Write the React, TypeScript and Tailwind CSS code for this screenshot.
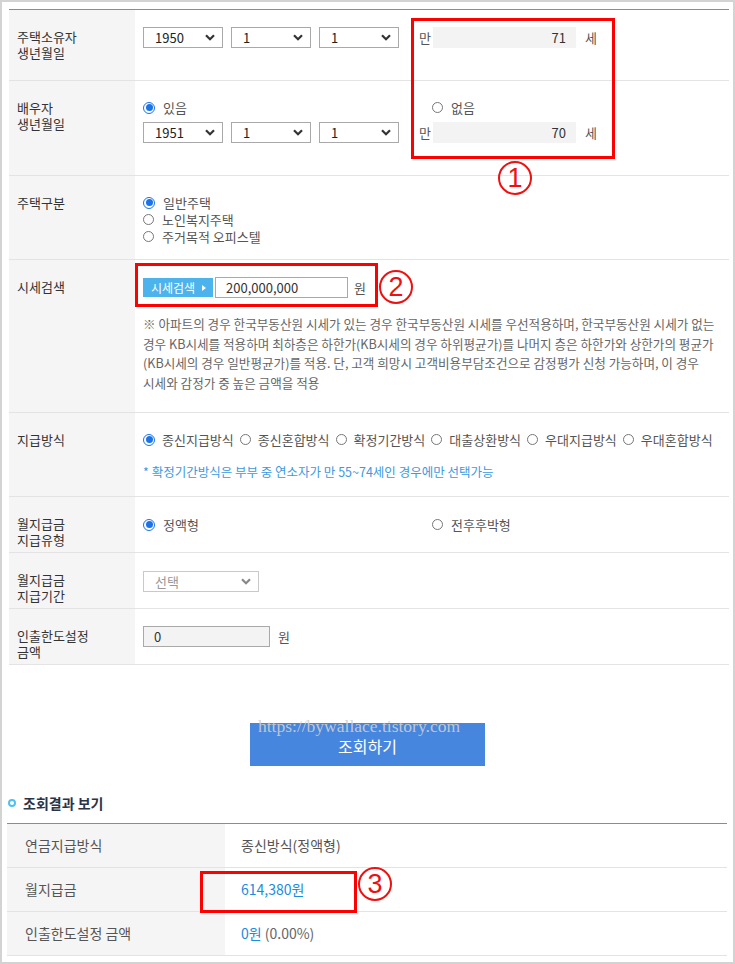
import React from "react";

const font = { fontFamily: "'Noto Sans CJK KR', 'Noto Sans', sans-serif" };

const Radio: React.FC<{ checked?: boolean }> = ({ checked }) =>
  checked ? (
    <span className="inline-flex w-[12px] h-[12px] shrink-0 items-center justify-center rounded-full border border-[#1a73e8] bg-white">
      <span className="w-[7px] h-[7px] rounded-full bg-[#1a73e8]" />
    </span>
  ) : (
    <span className="inline-block w-[11px] h-[11px] shrink-0 rounded-full border border-[#767676] bg-white" />
  );

const Chevron: React.FC<{ color?: string }> = ({ color = "#333" }) => (
  <svg width="10" height="7" viewBox="0 0 10 7">
    <path d="M1 1.2 L5 5.2 L9 1.2" fill="none" stroke={color} strokeWidth="2.2" />
  </svg>
);

const Select: React.FC<{ value: string; width: string; muted?: boolean }> = ({ value, width, muted }) => (
  <div
    className={`${width} h-[21px] flex items-center justify-between pl-[11px] pr-[7px] border bg-white text-[13px] ${
      muted ? "border-[#c9c9c9] text-[#999]" : "border-[#a9a9a9] text-[#222]"
    }`}
  >
    <span>{value}</span>
    <Chevron color={muted ? "#888" : "#333"} />
  </div>
);

const AgeBox: React.FC<{ age: string }> = ({ age }) => (
  <div className="flex items-center text-[13px] text-[#555]">
    <span>만</span>
    <div className="ml-[2px] w-[143px] h-[21px] bg-[#f3f3f3] flex items-center justify-end pr-[10px] text-[#333]">
      {age}
    </div>
    <span className="ml-[9px]">세</span>
  </div>
);

const Row: React.FC<{ h: string; label: React.ReactNode; pt: string; children: React.ReactNode }> = ({
  h,
  label,
  pt,
  children,
}) => (
  <div className={`flex ${h} border-b border-[#e3e3e3]`}>
    <div className="w-[126px] shrink-0 bg-[#f5f5f5] pl-[8px] pt-[19px] text-[13px] leading-[16px] text-[#333]">
      {label}
    </div>
    <div className={`flex-1 pl-[8px] ${pt} text-[13px] text-[#555]`}>{children}</div>
  </div>
);

const Circled: React.FC<{ n: string; className: string }> = ({ n, className }) => (
  <div
    className={`absolute w-[34px] h-[34px] rounded-full border-2 border-[#ee1111] flex items-center justify-center text-[27px] leading-none text-[#ee1111] ${className}`}
    style={{ fontFamily: "'Liberation Sans', sans-serif" }}
  >
    {n}
  </div>
);

const methods = ["종신지급방식", "종신혼합방식", "확정기간방식", "대출상환방식", "우대지급방식", "우대혼합방식"];

const App: React.FC = () => {
  return (
    <div className="relative w-[735px] h-[964px] border-2 border-[#d3d3d3] bg-white overflow-hidden" style={font}>
      {/* 입력 테이블 */}
      <div className="ml-[7px] mr-[4px] mt-[7px] border-t border-[#8c8c8c]">
        <Row h="h-[71px]" pt="pt-[17px]" label={<>주택소유자<br />생년월일</>}>
          <div className="flex items-center">
            <div className="flex gap-[8px]">
              <Select value="1950" width="w-[80px]" />
              <Select value="1" width="w-[80px]" />
              <Select value="1" width="w-[80px]" />
            </div>
            <div className="ml-[20px]">
              <AgeBox age="71" />
            </div>
          </div>
        </Row>

        <Row h="h-[95px]" pt="pt-[18px]" label={<>배우자<br />생년월일</>}>
          <div className="flex items-center leading-[17px] text-[13px]">
            <div className="w-[289px] flex items-center gap-[8px]">
              <Radio checked />
              <span>있음</span>
            </div>
            <div className="flex items-center gap-[8px]">
              <Radio />
              <span>없음</span>
            </div>
          </div>
          <div className="mt-[6px] flex items-center">
            <div className="flex gap-[8px]">
              <Select value="1951" width="w-[80px]" />
              <Select value="1" width="w-[80px]" />
              <Select value="1" width="w-[80px]" />
            </div>
            <div className="ml-[20px]">
              <AgeBox age="70" />
            </div>
          </div>
        </Row>

        <Row h="h-[84px]" pt="pt-[18px]" label="주택구분">
          <div className="flex flex-col leading-[17px]">
            {[
              ["일반주택", true],
              ["노인복지주택", false],
              ["주거목적 오피스텔", false],
            ].map(([t, c]) => (
              <div key={t as string} className="flex items-center gap-[8px]">
                <Radio checked={c as boolean} />
                <span>{t as string}</span>
              </div>
            ))}
          </div>
        </Row>

        <Row h="h-[153px]" pt="pt-[17px]" label="시세검색">
          <div className="flex items-center">
            <div className="w-[70px] h-[19px] bg-[#4db3ec] text-white text-[12px] flex items-center pl-[8px] gap-[7px]">
              <span>시세검색</span>
              <svg width="4" height="6" viewBox="0 0 4 6">
                <path d="M0 0 L4 3 L0 6 Z" fill="#fff" />
              </svg>
            </div>
            <div className="ml-[2px] w-[133px] h-[21px] border border-[#a9a9a9] flex items-center pl-[10px] text-[13px] text-[#333]">
              200,000,000
            </div>
            <span className="ml-[6px]">원</span>
          </div>
          <div className="mt-[16px] text-[12.6px] leading-[19.5px] text-[#666] whitespace-nowrap">
            <div>※ 아파트의 경우 한국부동산원 시세가 있는 경우 한국부동산원 시세를 우선적용하며, 한국부동산원 시세가 없는</div>
            <div>경우 KB시세를 적용하며 최하층은 하한가(KB시세의 경우 하위평균가)를 나머지 층은 하한가와 상한가의 평균가</div>
            <div>(KB시세의 경우 일반평균가)를 적용. 단, 고객 희망시 고객비용부담조건으로 감정평가 신청 가능하며, 이 경우</div>
            <div>시세와 감정가 중 높은 금액을 적용</div>
          </div>
        </Row>

        <Row h="h-[84px]" pt="pt-[18px]" label="지급방식">
          <div className="flex items-center leading-[17px] whitespace-nowrap">
            {methods.map((m, i) => (
              <div key={m} className="flex items-center gap-[7px] mr-[6px]">
                <Radio checked={i === 0} />
                <span>{m}</span>
              </div>
            ))}
          </div>
          <div className="mt-[15px] leading-[17px] text-[12.5px] text-[#3b9ae1]">
            * 확정기간방식은 부부 중 연소자가 만 55~74세인 경우에만 선택가능
          </div>
        </Row>

        <Row h="h-[56px]" pt="pt-[19px]" label={<>월지급금<br />지급유형</>}>
          <div className="flex items-center leading-[17px]">
            <div className="w-[289px] flex items-center gap-[8px]">
              <Radio checked />
              <span>정액형</span>
            </div>
            <div className="flex items-center gap-[8px]">
              <Radio />
              <span>전후후박형</span>
            </div>
          </div>
        </Row>

        <Row h="h-[56px]" pt="pt-[18px]" label={<>월지급금<br />지급기간</>}>
          <Select value="선택" width="w-[116px]" muted />
        </Row>

        <Row h="h-[56px]" pt="pt-[17px]" label={<>인출한도설정<br />금액</>}>
          <div className="flex items-center">
            <div className="w-[127px] h-[21px] border border-[#a9a9a9] bg-[#f3f3f3] flex items-center pl-[10px] text-[13px] text-[#333]">
              0
            </div>
            <span className="ml-[8px]">원</span>
          </div>
        </Row>
      </div>

      {/* 조회 버튼 */}
      <div className="mt-[58px] flex justify-center">
        <div className="relative w-[235px] h-[43px] bg-[#4786de] flex items-center justify-center pt-[2px] text-white text-[16px]">
          조회하기
          <span
            className="absolute left-[8px] top-[-7px] text-[17.5px] leading-[20px] text-[#cfcfcf]/90 whitespace-nowrap"
            style={{ fontFamily: "'Liberation Serif', serif" }}
          >
            https://bywallace.tistory.com
          </span>
        </div>
      </div>

      {/* 조회결과 */}
      <div className="mt-[27px] ml-[6px] flex items-center h-[20px]">
        <span className="w-[8px] h-[8px] rounded-full border-2 border-[#4fc1ee]" />
        <span className="ml-[7px] text-[14px] font-bold text-[#2b3446]">조회결과 보기</span>
      </div>

      <div className="mt-[10px] ml-[5px] mr-[6px] border-t border-[#8c8c8c] text-[14px]">
        {[
          ["연금지급방식", <span className="text-[#555]">종신방식(정액형)</span>],
          ["월지급금", <span className="text-[#1a8be0]">614,380원</span>],
          [
            "인출한도설정 금액",
            <span>
              <span className="text-[#1a8be0]">0원</span> <span className="text-[#666]">(0.00%)</span>
            </span>,
          ],
        ].map(([l, v], i) => (
          <div key={i} className="flex h-[44px] border-b border-[#e3e3e3]">
            <div className="w-[218px] shrink-0 bg-[#f5f5f5] pl-[18px] flex items-center text-[#555]">{l}</div>
            <div className="pl-[16px] flex items-center">{v}</div>
          </div>
        ))}
      </div>

      {/* 주석 표시 */}
      <div className="absolute left-[409px] top-[16px] w-[204px] h-[141px] border-[3px] border-[#ff0000]" />
      <Circled n="1" className="left-[496px] top-[159px]" />
      <div className="absolute left-[133px] top-[261px] w-[243px] h-[44px] border-[3px] border-[#ff0000]" />
      <Circled n="2" className="left-[377px] top-[268px]" />
      <div className="absolute left-[198px] top-[869px] w-[157px] h-[42px] border-[3px] border-[#ff0000]" />
      <Circled n="3" className="left-[356px] top-[865px]" />
    </div>
  );
};

export default App;
